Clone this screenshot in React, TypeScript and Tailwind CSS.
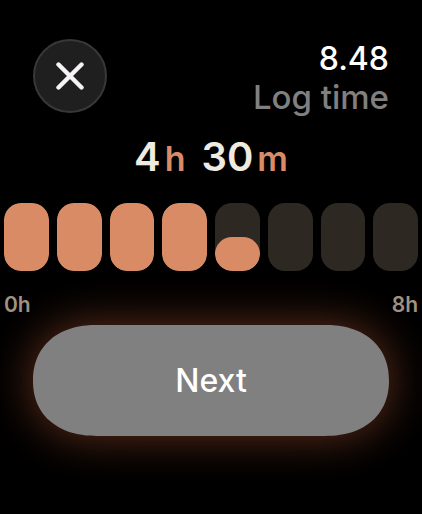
import clsx from 'clsx';

const TOTAL_HOURS = 8;
const loggedMinutes = 270;

// How much of each hour block is filled, from 0 to 1
const blocks = Array.from({ length: TOTAL_HOURS }, (_, i) =>
  Math.min(Math.max(loggedMinutes / 60 - i, 0), 1)
);

function CloseIcon() {
  return (
    <svg
      viewBox="0 0 28 28"
      className="size-7"
      fill="none"
      stroke="#f5f3f5"
      strokeWidth="4.4"
      strokeLinecap="round"
      aria-hidden="true"
    >
      <path d="M2.5 2.5 25.5 25.5M25.5 2.5 2.5 25.5" />
    </svg>
  );
}

function Header() {
  return (
    <header className="flex items-start justify-between px-[33px]">
      <button
        type="button"
        aria-label="Close"
        className="flex size-[74px] items-center justify-center rounded-full border-2 border-[#383838] bg-[#1f1f1f]"
      >
        <CloseIcon />
      </button>
      <div className="text-right leading-[39px] font-medium">
        <p className="text-[32px] text-white">8.48</p>
        <h1 className="text-[33px] text-[#808080]">Log time</h1>
      </div>
    </header>
  );
}

function Duration() {
  return (
    <p className="mt-5 flex items-baseline justify-center gap-4 text-[40px] leading-10 font-semibold text-[#f0ebe0]">
      <span className="flex items-baseline gap-1">
        {Math.floor(loggedMinutes / 60)}
        <span className="text-[34px] text-[#d98b66]">h</span>
      </span>
      <span className="flex items-baseline gap-1">
        {loggedMinutes % 60}
        <span className="text-[34px] text-[#d98b66]">m</span>
      </span>
    </p>
  );
}

function HourBlocks() {
  return (
    <div className="mt-6 px-1">
      <div className="flex gap-2">
        {blocks.map((fill, i) => (
          <div
            key={i}
            className="flex h-[68px] flex-1 items-end overflow-hidden rounded-[17px] bg-[#2d2822]"
          >
            <div
              className={clsx('w-full rounded-[17px]', fill > 0 && 'bg-[#d98b66]')}
              style={{ height: `${fill * 100}%` }}
            />
          </div>
        ))}
      </div>
      <div className="mt-5 flex justify-between text-[21px] leading-7 font-semibold text-[#a09484]">
        <span>0h</span>
        <span>{TOTAL_HOURS}h</span>
      </div>
    </div>
  );
}

export default function App() {
  return (
    <main className="min-h-screen bg-black pt-[39px] font-['Inter','Liberation_Sans',sans-serif]">
      <Header />
      <Duration />
      <HourBlocks />
      <div className="mt-1.5 px-[33px]">
        <button
          type="button"
          className="h-[111px] w-full rounded-[64px/56px] bg-[#808080] text-[32px] font-medium text-white shadow-[0_0_44px_2px_#5c2d1a] [corner-shape:superellipse(1.15)]"
        >
          Next
        </button>
      </div>
    </main>
  );
}
